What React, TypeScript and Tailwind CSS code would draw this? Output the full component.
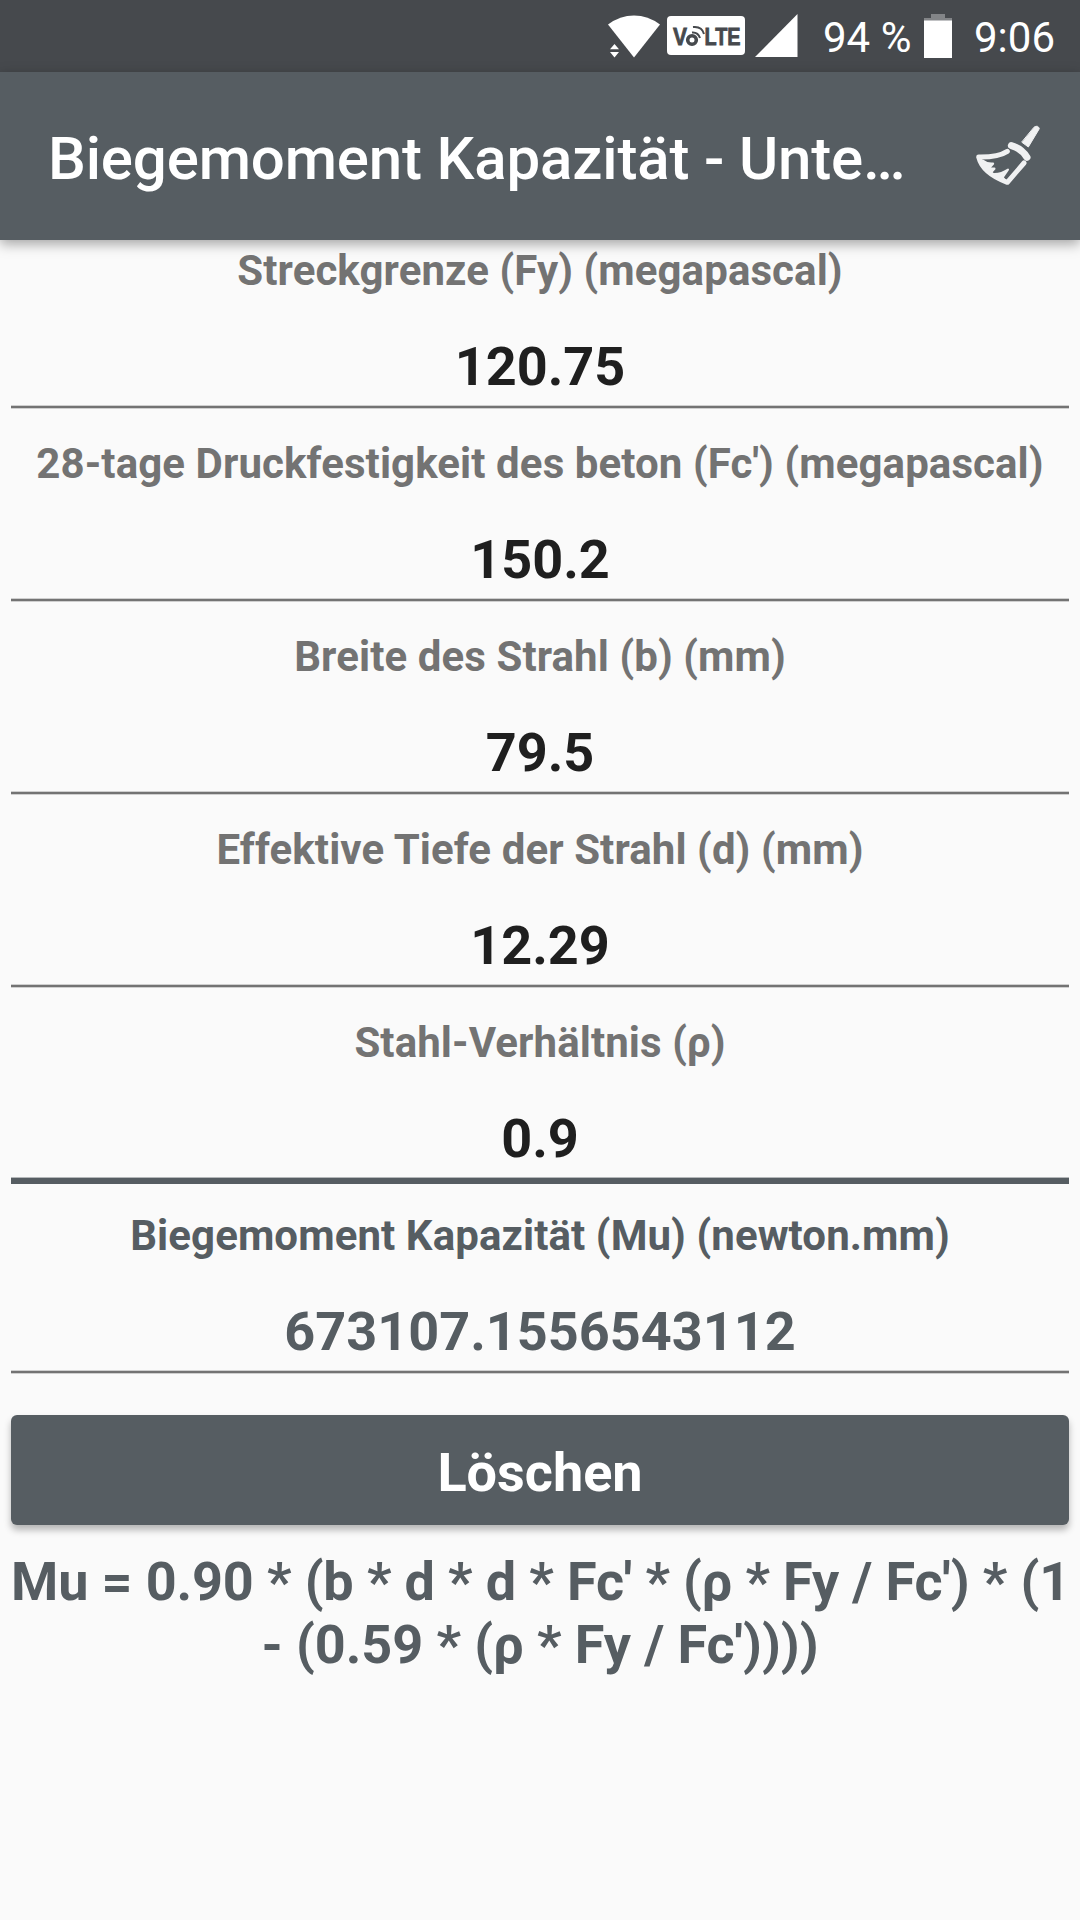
interface Field {
  label: string
  value: string
  focused?: boolean
  result?: boolean
}

const fields: Field[] = [
  { label: 'Streckgrenze (Fy) (megapascal)', value: '120.75' },
  { label: "28-tage Druckfestigkeit des beton (Fc') (megapascal)", value: '150.2' },
  { label: 'Breite des Strahl (b) (mm)', value: '79.5' },
  { label: 'Effektive Tiefe der Strahl (d) (mm)', value: '12.29' },
  { label: 'Stahl-Verhältnis (ρ)', value: '0.9', focused: true },
  { label: 'Biegemoment Kapazität (Mu) (newton.mm)', value: '673107.1556543112', result: true },
]

function WifiIcon() {
  return (
    <svg width="54" height="44" viewBox="607 14 54 44" fill="#fff">
      <path d="M608 24.5Q620 15.500 634 15.500T660 24.500L634 57.500Z" />
      <path d="M610 49.300L614.500 44L619 49.300ZM610 52L619 52L614.500 57.500Z" />
    </svg>
  )
}

function VolteIcon() {
  return (
    <svg width="78" height="39" viewBox="667 16 78 39">
      <rect x="667" y="16" width="78" height="39" rx="4" fill="#fff" />
      <g fill="#46494d" stroke="#46494d" strokeWidth="0.8" fontFamily="'Liberation Sans', sans-serif" fontWeight="700" fontSize="23">
        <text x="673" y="45" textLength="14" lengthAdjust="spacingAndGlyphs">V</text>
        <text x="704.500" y="45" textLength="36" lengthAdjust="spacingAndGlyphs">LTE</text>
      </g>
      <g fill="none" stroke="#46494d">
        <circle cx="692" cy="40" r="4.300" strokeWidth="3.600" />
        <path d="M692 32.500Q698 32 700 38" strokeWidth="2" />
        <path d="M693 27Q702 26 704 34" strokeWidth="2" />
      </g>
    </svg>
  )
}

function SignalIcon() {
  return (
    <svg width="43" height="43" viewBox="0 0 43 43" fill="#fff">
      <path d="M0 43L42.500 0V43Z" />
    </svg>
  )
}

function BatteryIcon() {
  return (
    <svg width="28" height="44" viewBox="0 0 28 44">
      <path d="M7 0H21V4H28V7H0V4H7Z" fill="#838588" />
      <path d="M0 6.500H28V44H0Z" fill="#fff" />
    </svg>
  )
}

function BroomIcon() {
  return (
    <svg width="75" height="70" viewBox="60 60 225 210" fill="none" stroke="#f0f1f2" strokeLinecap="round" strokeLinejoin="round">
      <path d="M253 81Q264 74 268 86L235 141L216 127Z" fill="#f0f1f2" strokeWidth="3" />
      <path d="M184 137Q214 145 231 172" strokeWidth="21" />
      <path d="M172 154Q145 172 86 171Q98 220 172 247L222 189" strokeWidth="15" />
      <path d="M98 182Q112 193 129 191L116 205L133 206L124 216L104 200Z" fill="#f0f1f2" strokeWidth="7" />
      <path d="M134 222Q154 222 174 209L158 232L166 242L140 228Z" fill="#f0f1f2" strokeWidth="6" />
    </svg>
  )
}

function StatusBar() {
  return (
    <div className="flex h-[72px] items-start bg-[#46494d] pl-[607px] text-[42px] leading-[49px] text-white">
      <div className="mt-[14px]"><WifiIcon /></div>
      <div className="mt-4 ml-[6px]"><VolteIcon /></div>
      <div className="mt-[14px] ml-[10px]"><SignalIcon /></div>
      <span className="mt-[13px] ml-[25px] w-[101px] whitespace-nowrap">94 %</span>
      <div className="mt-[14px]"><BatteryIcon /></div>
      <span className="mt-[13px] ml-[22px]">9:06</span>
    </div>
  )
}

function FieldRow({ label, value, focused, result }: Field) {
  return (
    <div className="flex h-[193px] flex-col text-center font-bold">
      <div className={`text-[42px] leading-[49px] tracking-[0.09px] whitespace-nowrap ${result ? 'text-[#565d62]' : 'text-[#737373]'}`}>
        {label}
      </div>
      <div className={`mt-10 text-[54px] leading-[63px] ${result ? 'text-[#565d62]' : 'text-[#1f1f1f]'}`}>
        {value}
      </div>
      {focused ? (
        <div className="mt-[7px] h-[7px] border-t border-[#b5b8ba] bg-[#565d62]" />
      ) : (
        <div className="mt-[7px] h-1 border-y border-[#cfcfcf] bg-[#737373]" />
      )}
    </div>
  )
}

export default function App() {
  return (
    <div className="flex h-[1920px] w-[1080px] flex-col overflow-hidden bg-[#fafafa] font-['Roboto',sans-serif]">
      <StatusBar />

      {/* App bar */}
      <header className="z-10 flex h-[168px] shrink-0 items-start justify-between bg-[#565d62] pr-[35px] pl-12 text-white shadow-[0_4px_12px_rgba(0,0,0,0.35)]">
        <h1 className="mt-[52px] text-[60px] leading-[70px] font-medium tracking-[-0.16px] whitespace-nowrap">
          Biegemoment Kapazität - Unte…
        </h1>
        <button className="mt-12"><BroomIcon /></button>
      </header>

      {/* Inputs and result */}
      <main className="flex flex-col px-[11px] pt-[6px]">
        {fields.map((field) => (
          <FieldRow key={field.label} {...field} />
        ))}

        <button className="mt-[11px] h-[110px] rounded-[6px] bg-[#565d62] pt-[5px] text-[54px] leading-[63px] font-bold text-white shadow-[0_5px_7px_rgba(0,0,0,0.28)]">
          Löschen
        </button>

        <p className="mt-[25px] text-center text-[54px] leading-[63px] font-bold whitespace-nowrap text-[#565d62]">
          <span className="tracking-[-0.14px]">Mu = 0.90 * (b * d * d * Fc' * (ρ * Fy / Fc') * (1</span>
          <br />
          <span className="tracking-[-0.06px]">- (0.59 * (ρ * Fy / Fc'))))</span>
        </p>
      </main>
    </div>
  )
}
